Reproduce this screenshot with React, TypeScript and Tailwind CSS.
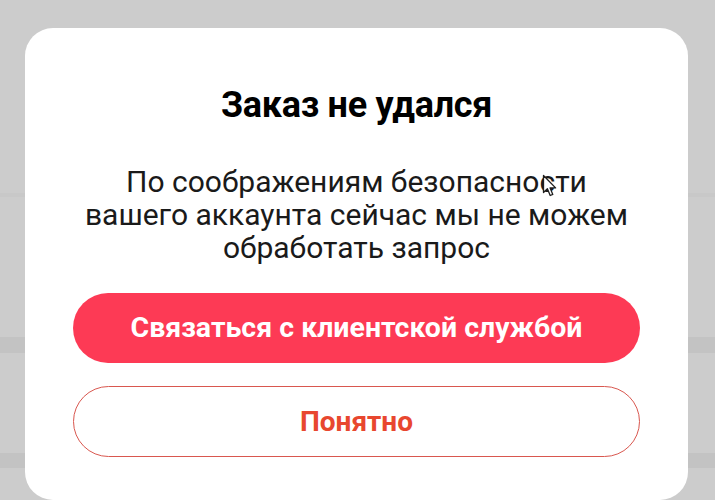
import React from 'react';

function Cursor() {
  return (
    <svg width="16" height="24" viewBox="0 0 16 24" className="absolute left-[542px] top-[174px]">
      <path
        d="M1.5 1.5 L1.5 18.5 L5.4 14.8 L8.2 21.5 L10.8 20.4 L8.1 13.9 L13.6 13.9 Z"
        fill="#ffffff"
        stroke="#1e1e1e"
        strokeWidth="1.3"
        strokeLinejoin="round"
      />
    </svg>
  );
}

export default function App() {
  return (
    <div
      className="relative h-[500px] w-[715px] overflow-hidden bg-[#cccccc]"
      style={{ fontFamily: 'Roboto, "Noto Sans", sans-serif' }}
    >
      {/* затемнённая страница под модалкой */}
      <div className="flex flex-col">
        <div className="h-[193px]" />
        <div className="h-[4px] bg-[#c8c8c8]" />
        <div className="h-[140px]" />
        <div className="h-[16px] bg-[#c3c3c3]" />
        <div className="h-[100px]" />
        <div className="h-[15px] bg-[#c3c3c3]" />
      </div>

      {/* модальное окно */}
      <div className="absolute left-[25px] top-[28px] flex h-[472px] w-[663px] flex-col items-center rounded-[28px] bg-white px-[48px] pt-[58px]">
        <h2 className="text-[36px] font-bold leading-[38px] tracking-[-0.3px] text-black">Заказ не удался</h2>
        <p className="mt-[41px] whitespace-nowrap text-center text-[30px] leading-[33px] text-[#1a1a1a]">
          По соображениям безопасности
          <br />
          вашего аккаунта сейчас мы не можем
          <br />
          обработать запрос
        </p>
        <button className="mt-[29px] flex h-[70px] w-full items-center justify-center rounded-full bg-[#fd3a55] text-[28.5px] font-bold text-white">
          Связаться с клиентской службой
        </button>
        <button className="mt-[23px] flex h-[71px] w-full items-center justify-center rounded-full border-[1.5px] border-[#d9574f] bg-white text-[28px] font-bold text-[#e8472f]">
          Понятно
        </button>
      </div>

      <Cursor />
    </div>
  );
}
